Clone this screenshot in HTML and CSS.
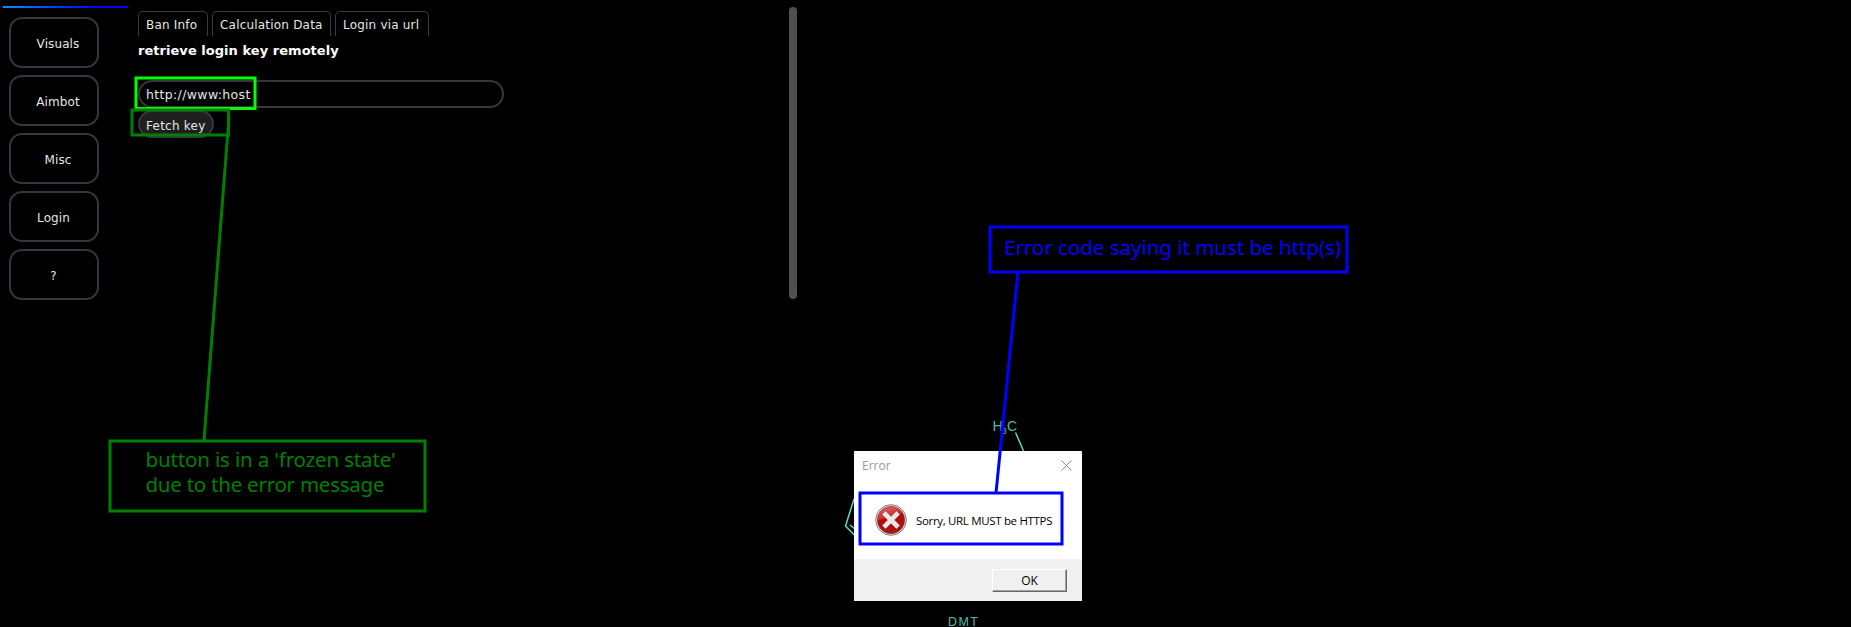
FILE: index.html
```
<!DOCTYPE html>
<html lang="en">
<head>
<meta charset="utf-8">
<title>Login via url</title>
<link rel="stylesheet" href="styles.css">
</head>
<body>
<div class="app">
  <aside class="sidebar">
    <div class="accent"></div>
    <nav class="menu">
      <button class="menu-item indent">Visuals</button>
      <button class="menu-item indent">Aimbot</button>
      <button class="menu-item indent">Misc</button>
      <button class="menu-item">Login</button>
      <button class="menu-item">?</button>
    </nav>
  </aside>
  <main class="content">
    <div class="tabs">
      <button class="tab tab-ban">Ban Info</button>
      <button class="tab tab-calc">Calculation Data</button>
      <button class="tab tab-login">Login via url</button>
    </div>
    <h1 class="heading">retrieve login key remotely</h1>
    <div class="field">http://www:host</div>
    <button class="fetch">Fetch key</button>
  </main>
  <div class="scrollbar"></div>
</div>

<svg class="overlay" viewBox="0 0 1851 627">
  <g class="molecule">
    <text x="992.5" y="431" font-size="14.5">H</text>
    <text x="1001.500" y="434" font-size="9.500">3</text>
    <text x="1007" y="431" font-size="14">C</text>
    <path d="M1015.500 432.500L1024 452M854 499L845.500 526L855 535.500M850 525L855 529"/>
    <text x="948" y="625.500" font-size="12.500" textLength="30">DMT</text>
  </g>
</svg>

<section class="dialog">
  <header class="dialog-title">
    <span>Error</span>
    <svg class="close" viewBox="0 0 11 11"><path d="M.5 .5l10 10M10.500 .5l-10 10"/></svg>
  </header>
  <div class="dialog-body">
    <svg class="error-icon" viewBox="0 0 32 32">
      <defs>
        <linearGradient id="red" x1="0" y1="0" x2="0.300" y2="1">
          <stop offset="0" stop-color="#df6a6a"/><stop offset=".45" stop-color="#c93232"/>
          <stop offset=".5" stop-color="#b40b0b"/><stop offset="1" stop-color="#a81414"/>
        </linearGradient>
      </defs>
      <circle cx="16" cy="16" r="15.300" fill="#f2f2f2" stroke="#777"/>
      <circle cx="16" cy="16" r="13.700" fill="url(#red)" stroke="#8d3030" stroke-width=".6"/>
      <path d="M10.500 10.500l11 11M21.500 10.500l-11 11" stroke="#e8e8e8" stroke-width="4.600" stroke-linecap="square"/>
    </svg>
    <span class="message">Sorry, URL MUST be HTTPS</span>
  </div>
  <footer class="dialog-footer"><button class="ok">OK</button></footer>
</section>

<svg class="overlay" viewBox="0 0 1851 627">
  <g class="mark lime"><rect x="136" y="78" width="119" height="30.500"/></g>
  <g class="mark green">
    <rect x="132" y="110" width="96.500" height="25"/>
    <path d="M229 117L204 440"/>
    <rect x="110" y="441" width="315" height="70"/>
    <text x="145.500" y="466.500" textLength="250">button is in a 'frozen state'</text>
    <text x="145.500" y="491.500" textLength="239">due to the error message</text>
  </g>
  <g class="mark blue">
    <rect x="990" y="227" width="357" height="45"/>
    <path d="M1018 272L996 493"/>
    <rect x="860" y="493" width="202" height="51"/>
    <text x="1004" y="255" textLength="337">Error code saying it must be http(s)</text>
  </g>
</svg>
</body>
</html>
```
FILE: styles.css
```
* { box-sizing: border-box; }
body {
  margin: 0;
  width: 1851px;
  height: 627px;
  overflow: hidden;
  background: #000;
  color: #e6e6e6;
  font: 12px/16px "DejaVu Sans", Verdana, sans-serif;
}
button { font: inherit; color: inherit; background: none; margin: 0; }
.app { display: flex; height: 627px; }
.sidebar { width: 138px; padding: 6px 0 0 3px; }
.accent { width: 125px; height: 2px; background: linear-gradient(90deg, #0090ff, #00f 75%); }
.menu { display: flex; flex-direction: column; gap: 7px; padding: 9px 0 0 6px; }
.menu-item {
  width: 90px;
  height: 51px;
  border: 2px solid #37353d;
  border-radius: 13px;
  padding: 2px 1px 0 0;
  letter-spacing: .1px;
}
.menu-item.indent { padding: 2px 0 0 8px; }
.content { width: 651px; padding-top: 11px; }
.tabs { display: flex; gap: 4px; }
.tab {
  height: 25px;
  border: 1px solid #3a3840;
  border-bottom: 0;
  border-radius: 5px 5px 0 0;
  padding: 2px 0 0 7px;
  text-align: left;
  letter-spacing: .2px;
  white-space: nowrap;
}
.tab-ban { width: 70px; }
.tab-calc { width: 119px; }
.tab-login { width: 94px; }
.heading { margin: 7px 0 21px; font-size: 13px; line-height: 16px; letter-spacing: .04px; color: #fff; white-space: nowrap; }
.field {
  width: 366px;
  height: 28px;
  border: 2px solid #37353d;
  border-radius: 14px;
  padding: 5px 6px 0;
  letter-spacing: .35px;
  font-size: 12.5px;
}
.fetch {
  display: block;
  width: 76px;
  height: 28px;
  margin-top: 2px;
  border: 2px solid #37353d;
  border-radius: 14px;
  background: #1f1f1f;
  padding: 3px 0 0 6px;
  text-align: left;
  letter-spacing: .25px;
}
.scrollbar { width: 8px; height: 292px; margin-top: 7px; border-radius: 4px; background: #4f4f4f; }
.overlay { position: absolute; left: 0; top: 0; width: 1851px; height: 627px; }
.molecule { fill: #4bbdad; font-family: "Liberation Sans", Arial, sans-serif; }
.molecule path { fill: none; stroke: #65d5c5; stroke-width: 1.5; }
.mark { fill: none; stroke-width: 3; font: 20.5px "Noto Sans", "DejaVu Sans", sans-serif; }
.mark text { stroke: none; }
.lime { stroke: #0f0; }
.green { stroke: #008000; }
.green text { fill: #008000; }
.blue { stroke: #00f; }
.blue text { fill: #00f; }
.dialog {
  position: absolute;
  left: 854px;
  top: 451px;
  width: 228px;
  height: 150px;
  display: flex;
  flex-direction: column;
  background: #fff;
  color: #000;
  font-family: "Open Sans", "Noto Sans", sans-serif;
}
.dialog-title {
  display: flex;
  justify-content: space-between;
  align-items: center;
  height: 29px;
  padding: 0 10px 0 8px;
  color: #999;
}
.close { width: 11px; height: 11px; stroke: #888; fill: none; }
.dialog-body { display: flex; align-items: center; gap: 9px; height: 79px; padding: 1px 0 0 21px; }
.error-icon { width: 32px; height: 32px; }
.message { font-size: 11.5px; letter-spacing: -.33px; white-space: nowrap; padding-top: 2px; }
.dialog-footer { flex: 1; display: flex; justify-content: flex-end; align-items: flex-start; padding: 10px 15px 0 0; background: #f0f0f0; }
.ok {
  width: 75px;
  height: 23px;
  border: 1px solid;
  border-color: #fff #696969 #696969 #fff;
  box-shadow: inset -1px -1px #a0a0a0;
  padding: 0;
}
```
